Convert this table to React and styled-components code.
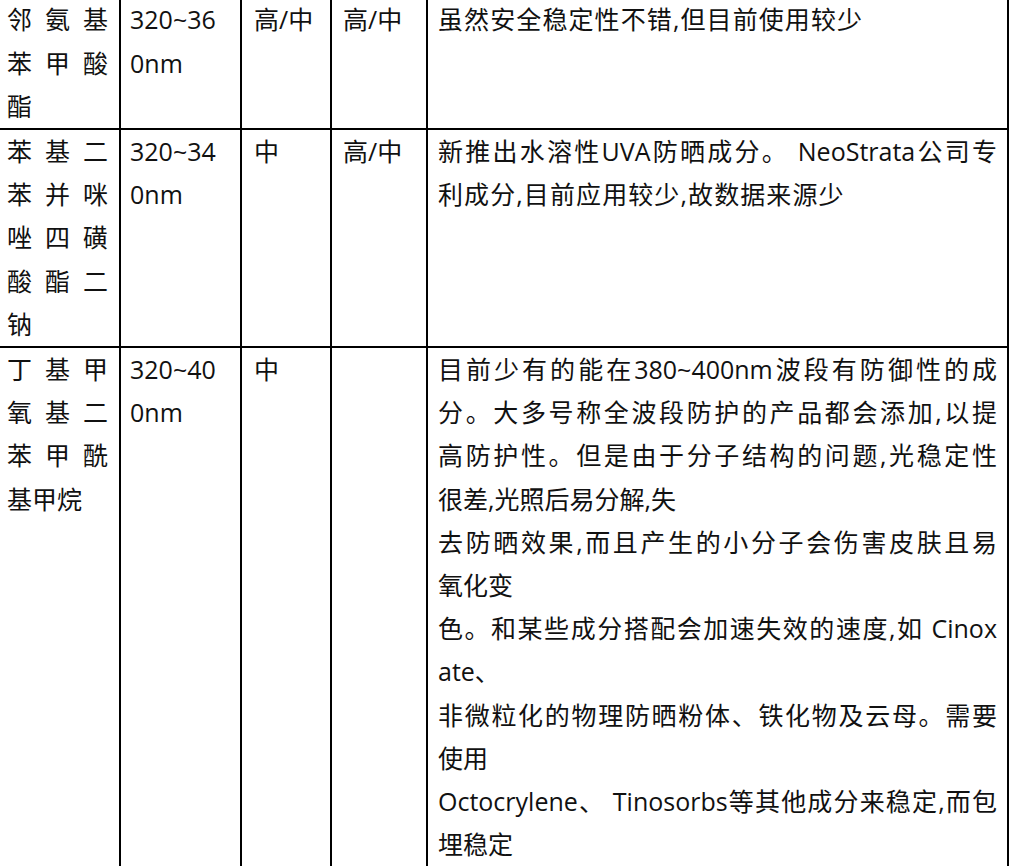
import React from "react";
import styled, { createGlobalStyle } from "styled-components";

const GlobalStyle = createGlobalStyle`
  html, body {
    margin: 0;
    padding: 0;
    background: #ffffff;
    overflow: hidden;
  }
  body {
    font-family: "Open Sans", "Noto Sans CJK SC", sans-serif;
    color: #111111;
  }
`;

const Table = styled.div`
  display: grid;
  grid-template-columns: 119px 119px 88px 94px 579px;
  gap: 2px;
  padding: 2px;
  background: #000000;
  width: max-content;
  margin: -3.6px 0 0 -2px;
`;

const Cell = styled.div`
  background: #ffffff;
  padding: 0 ${(p) => p.$pr}px 0 ${(p) => p.$pl}px;
  font-size: 25px;
  line-height: 43.2px;
  min-width: 0;
`;

const Line = styled.div`
  text-align: ${(p) => (p.$fill ? "justify" : "left")};
  text-align-last: ${(p) => (p.$fill ? "justify" : "left")};
  text-justify: inter-character;
  letter-spacing: ${(p) => (p.$track ? "1.1px" : "0")};
`;

const columns = [
  { key: "name", pl: 7, pr: 11 },
  { key: "range", pl: 9, pr: 8 },
  { key: "a", pl: 12, pr: 4 },
  { key: "b", pl: 11, pr: 4 },
  { key: "note", pl: 10, pr: 10 },
];

const F = (t) => ({ t, fill: true });
const L = (t) => ({ t, fill: false });
const S = (t) => ({ t, fill: false, track: true });

const rows = [
  {
    name: [F("邻氨基"), F("苯甲酸"), L("酯")],
    range: [L("320~36"), L("0nm")],
    a: [L("高/中")],
    b: [L("高/中")],
    note: [S("虽然安全稳定性不错,但目前使用较少")],
  },
  {
    name: [F("苯基二"), F("苯并咪"), F("唑四磺"), F("酸酯二"), L("钠")],
    range: [L("320~34"), L("0nm")],
    a: [L("中")],
    b: [L("高/中")],
    note: [
      F("新推出水溶性UVA防晒成分。 NeoStrata公司专"),
      S("利成分,目前应用较少,故数据来源少"),
    ],
  },
  {
    name: [F("丁基甲"), F("氧基二"), F("苯甲酰"), L("基甲烷")],
    range: [L("320~40"), L("0nm")],
    a: [L("中")],
    b: [],
    note: [
      F("目前少有的能在380~400nm波段有防御性的成"),
      F("分。大多号称全波段防护的产品都会添加,以提"),
      F("高防护性。但是由于分子结构的问题,光稳定性"),
      L("很差,光照后易分解,失"),
      F("去防晒效果,而且产生的小分子会伤害皮肤且易"),
      L("氧化变"),
      F("色。和某些成分搭配会加速失效的速度,如 Cinox"),
      L("ate、"),
      F("非微粒化的物理防晒粉体、铁化物及云母。需要"),
      L("使用"),
      F("Octocrylene、 Tinosorbs等其他成分来稳定,而包"),
      L("埋稳定"),
    ],
  },
];

export default function App() {
  return (
    <>
      <GlobalStyle />
      <Table>
        {rows.map((row, ri) =>
          columns.map((col) => (
            <Cell key={`${ri}-${col.key}`} $pl={col.pl} $pr={col.pr}>
              {row[col.key].map((ln, li) => (
                <Line key={li} $fill={ln.fill} $track={ln.track}>
                  {ln.t}
                </Line>
              ))}
            </Cell>
          ))
        )}
      </Table>
    </>
  );
}
